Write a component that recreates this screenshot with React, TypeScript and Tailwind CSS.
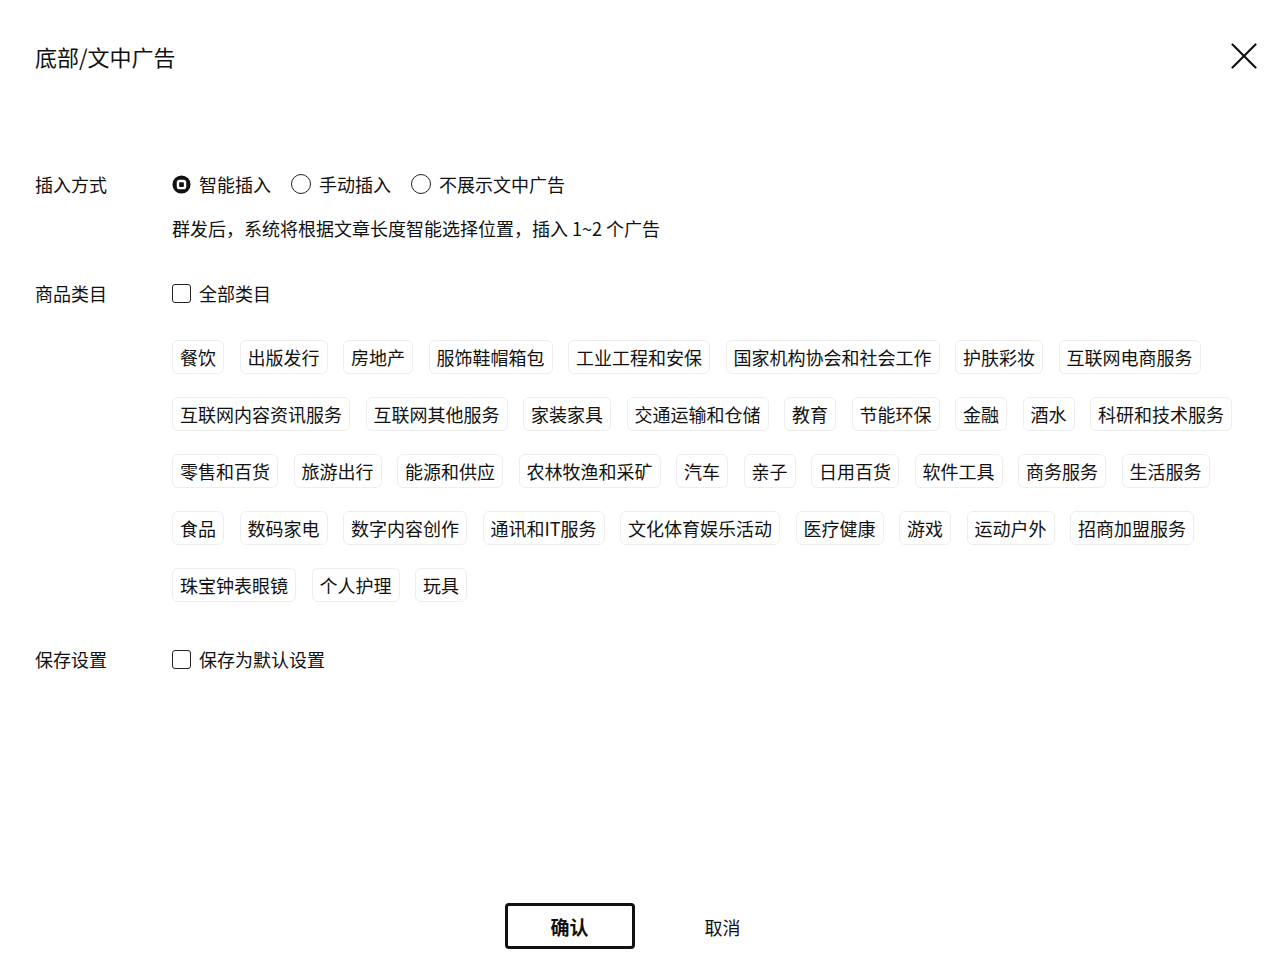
import React, { useState } from 'react';

const CATEGORIES = [
  '餐饮', '出版发行', '房地产', '服饰鞋帽箱包', '工业工程和安保', '国家机构协会和社会工作', '护肤彩妆', '互联网电商服务',
  '互联网内容资讯服务', '互联网其他服务', '家装家具', '交通运输和仓储', '教育', '节能环保', '金融', '酒水', '科研和技术服务',
  '零售和百货', '旅游出行', '能源和供应', '农林牧渔和采矿', '汽车', '亲子', '日用百货', '软件工具', '商务服务', '生活服务',
  '食品', '数码家电', '数字内容创作', '通讯和IT服务', '文化体育娱乐活动', '医疗健康', '游戏', '运动户外', '招商加盟服务',
  '珠宝钟表眼镜', '个人护理', '玩具',
];

const RADIOS = ['智能插入', '手动插入', '不展示文中广告'];

const CloseIcon = () => (
  <svg viewBox="0 0 26 26" className="w-[26px] h-[26px]" fill="none" stroke="#111" strokeWidth="2.2" strokeLinecap="round">
    <line x1="1.5" y1="1.5" x2="24.5" y2="24.5" />
    <line x1="24.5" y1="1.5" x2="1.5" y2="24.5" />
  </svg>
);

const RadioDot = ({ checked }: { checked: boolean }) =>
  checked ? (
    <svg viewBox="0 0 20 20" className="w-[19px] h-[19px] shrink-0">
      <circle cx="10" cy="10" r="9.5" fill="#111" />
      <rect x="5" y="5" width="10" height="10" rx="3" fill="#fff" />
      <rect x="7.5" y="7.5" width="5" height="5" rx="1" fill="#111" />
    </svg>
  ) : (
    <span className="w-[20px] h-[20px] shrink-0 rounded-full border border-[#222] bg-white" />
  );

const Checkbox = ({ checked, onClick, label }: { checked: boolean; onClick: () => void; label: string }) => (
  <button onClick={onClick} className="flex items-center gap-[8px] h-[24px]">
    <span
      className={`w-[19px] h-[19px] rounded-[3px] border border-[#222] ${checked ? 'bg-[#111]' : 'bg-white'}`}
    />
    <span className="text-[18px] leading-[24px]">{label}</span>
  </button>
);

export default function App() {
  const [mode, setMode] = useState(0);
  const [all, setAll] = useState(false);
  const [save, setSave] = useState(false);

  return (
    <div
      className="w-[1280px] h-[972px] bg-white text-[#111] flex flex-col"
      style={{ fontFamily: '"Noto Sans CJK SC", "Noto Sans", sans-serif' }}
    >
      <div className="flex items-center justify-between pl-[35px] pr-[23px] pt-[42px]">
        <h1 className="text-[22px] leading-[28px] font-normal">底部/文中广告</h1>
        <CloseIcon />
      </div>

      <div className="flex px-[35px] mt-[102px]">
        <div className="w-[137px] text-[18px] leading-[24px]">插入方式</div>
        <div className="flex-1">
          <div className="flex items-center gap-[20px] h-[24px]">
            {RADIOS.map((r, i) => (
              <button key={r} onClick={() => setMode(i)} className="flex items-center gap-[8px]">
                <RadioDot checked={mode === i} />
                <span className="text-[18px] leading-[24px]">{r}</span>
              </button>
            ))}
          </div>
          <p className="mt-[20px] text-[18px] leading-[24px]">
            群发后，系统将根据文章长度智能选择位置，插入 1~2 个广告
          </p>
        </div>
      </div>

      <div className="flex px-[35px] mt-[41px]">
        <div className="w-[137px] text-[18px] leading-[24px]">商品类目</div>
        <div className="flex-1">
          <Checkbox checked={all} onClick={() => setAll(!all)} label="全部类目" />
          <div className="mt-[35px] flex flex-wrap gap-x-[15.5px] gap-y-[23px]">
            {CATEGORIES.map((c) => (
              <span
                key={c}
                className="px-[7px] py-[6px] border border-[#eeeeee] rounded-[6px] text-[18px] leading-[20px] whitespace-nowrap"
              >
                {c}
              </span>
            ))}
          </div>
        </div>
      </div>

      <div className="flex px-[35px] mt-[45px]">
        <div className="w-[137px] text-[18px] leading-[24px]">保存设置</div>
        <Checkbox checked={save} onClick={() => setSave(!save)} label="保存为默认设置" />
      </div>

      <div className="mt-auto pb-[23px] flex justify-center gap-[35px]">
        <button className="w-[130px] h-[46px] rounded-[4px] border-[3px] border-[#111] bg-white text-[19px] leading-[24px] font-bold pt-[2px]">
          确认
        </button>
        <button className="w-[106px] h-[46px] text-[18px] leading-[24px] pt-[2px]">取消</button>
      </div>
    </div>
  );
}
